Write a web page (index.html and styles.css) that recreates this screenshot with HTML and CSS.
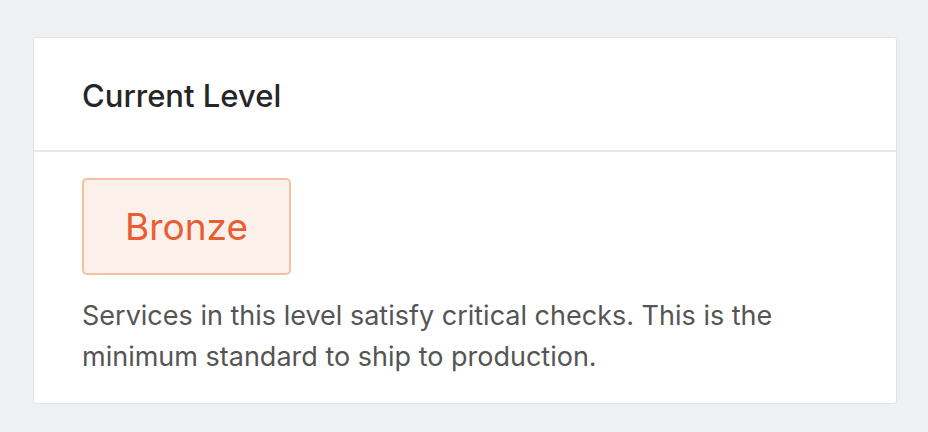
FILE: index.html
```html
<!DOCTYPE html>
<html lang="en">
<head>
    <meta charset="UTF-8">
    <meta name="viewport" content="width=device-width, initial-scale=1.0">
    <title>Current Level</title>
    <link rel="stylesheet" href="styles.css">
</head>
<body>
    <div class="card">
        <div class="card-header">
            <h2>Current Level</h2>
        </div>
        <div class="card-body">
            <div class="level-badge">Bronze</div>
            <p class="level-desc">Services in this level satisfy critical checks. This is the minimum standard to ship to production.</p>
        </div>
    </div>
</body>
</html>
```

FILE: styles.css
```css
body {
    font-family: Inter, "Noto Sans", Arial, sans-serif;
    margin: 0;
    padding: 37px 31px 0 33px;
    background-color: #eff0f4;
}
.card {
    background-color: #fff;
    border: 1px solid #e3e3e6;
    border-radius: 3px;
}
.card-header {
    height: 112px;
    padding: 0 48px;
    display: flex;
    align-items: center;
    border-bottom: 2px solid #e8e8ea;
}
.card-header h2 {
    margin: 0;
    padding-top: 2px;
    font-size: 31px;
    font-weight: 500;
    color: #262626;
}
.card-body {
    padding: 26px 48px 26px;
}
.level-badge {
    display: inline-block;
    padding: 0 41px;
    height: 93px;
    line-height: 93px;
    font-size: 37px;
    color: #e85d33;
    background-color: #fcf1ea;
    border: 2px solid #f6c09e;
    border-radius: 5px;
}
.level-desc {
    margin: 20px 0 0;
    font-size: 27px;
    line-height: 41px;
    color: #555;
}
```
